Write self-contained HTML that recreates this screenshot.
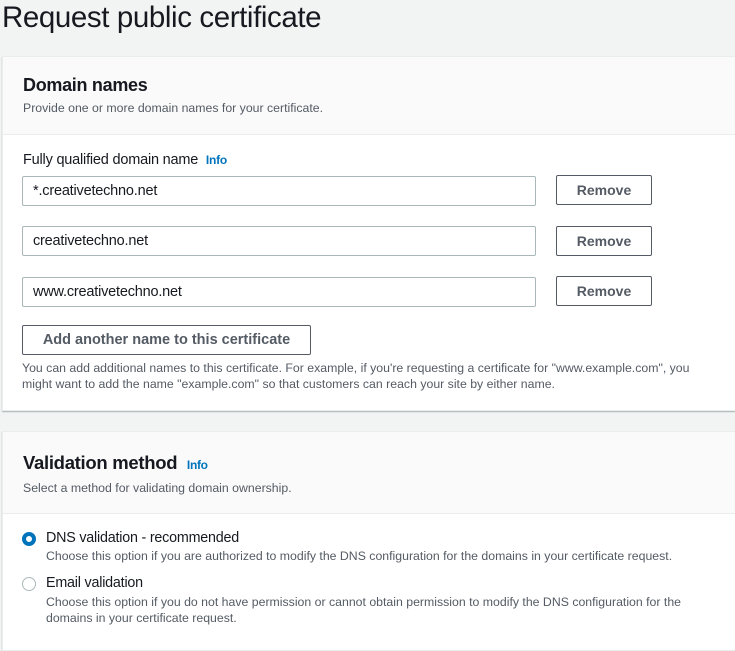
<!DOCTYPE html>
<html><head><style>
*{box-sizing:border-box;margin:0;padding:0}
body{width:735px;height:645px;background:#f2f3f3;font-family:"Liberation Sans",sans-serif;color:#16191f;position:relative;overflow:hidden}
.a{position:absolute;white-space:nowrap}
.panel{position:absolute;left:2px;width:735px;background:#fff;border:1px solid #eaeded;box-shadow:0 1px 1px rgba(0,28,36,.3)}
.hd{position:absolute;left:0;top:0;width:100%;background:#fafafa;border-bottom:1px solid #eaeded}
.in{position:absolute;left:22px;width:514px;height:30px;border:1px solid #aab7b8;border-radius:2px;font-size:14.5px;padding:6px 10px;letter-spacing:-.2px}
.btn{position:absolute;left:556px;width:96px;height:30px;border:1px solid #545b64;border-radius:2px;font-size:14px;font-weight:bold;color:#545b64;text-align:center;line-height:28px}
.info{color:#0073bb;font-weight:bold;font-size:12px}
.sm{font-size:12.3px;color:#545b64}
</style></head><body>
<div class="a" style="left:2px;top:1px;font-size:29.5px;letter-spacing:-.4px;color:#16191f">Request public certificate</div>
<div class="panel" style="top:56px;height:355px">
 <div class="hd" style="height:78px"></div>
 <div class="a" style="left:20px;top:18px;font-size:18px;font-weight:bold;letter-spacing:-.3px">Domain names</div>
 <div class="a sm" style="left:20px;top:44px">Provide one or more domain names for your certificate.</div>
 <div class="a" style="left:20px;top:95px;font-size:14.5px;letter-spacing:-.2px">Fully qualified domain name &nbsp;<span class="info">Info</span></div>
</div>
<div class="in" style="top:176px">*.creativetechno.net</div>
<div class="btn" style="top:175px">Remove</div>
<div class="in" style="top:226px">creativetechno.net</div>
<div class="btn" style="top:226px">Remove</div>
<div class="in" style="top:277px">www.creativetechno.net</div>
<div class="btn" style="top:276px">Remove</div>
<div class="btn" style="left:22px;top:325px;width:289px;font-size:14.5px">Add another name to this certificate</div>
<div class="a sm" style="left:22px;top:361px;line-height:15.5px">You can add additional names to this certificate. For example, if you're requesting a certificate for "www.example.com", you<br>might want to add the name "example.com" so that customers can reach your site by either name.</div>
<div class="panel" style="top:431px;height:220px">
 <div class="hd" style="height:82px"></div>
 <div class="a" style="left:20px;top:20px;font-size:18.5px;font-weight:bold;letter-spacing:-.3px">Validation method &nbsp;<span class="info">Info</span></div>
 <div class="a sm" style="left:20px;top:49px">Select a method for validating domain ownership.</div>
</div>
<div class="a" style="left:22px;top:532px;width:14px;height:14px;border-radius:50%;border:4px solid #0073bb;background:#fff"></div>
<div class="a" style="left:46px;top:530px;font-size:14.3px;letter-spacing:-.2px">DNS validation - recommended</div>
<div class="a sm" style="left:46px;top:549px">Choose this option if you are authorized to modify the DNS configuration for the domains in your certificate request.</div>
<div class="a" style="left:22px;top:577px;width:14px;height:14px;border-radius:50%;border:1px solid #aab7b8;background:#fff"></div>
<div class="a" style="left:46px;top:575px;font-size:14.3px;letter-spacing:-.2px">Email validation</div>
<div class="a sm" style="left:46px;top:594px;line-height:16px">Choose this option if you do not have permission or cannot obtain permission to modify the DNS configuration for the<br>domains in your certificate request.</div>
</body></html>
